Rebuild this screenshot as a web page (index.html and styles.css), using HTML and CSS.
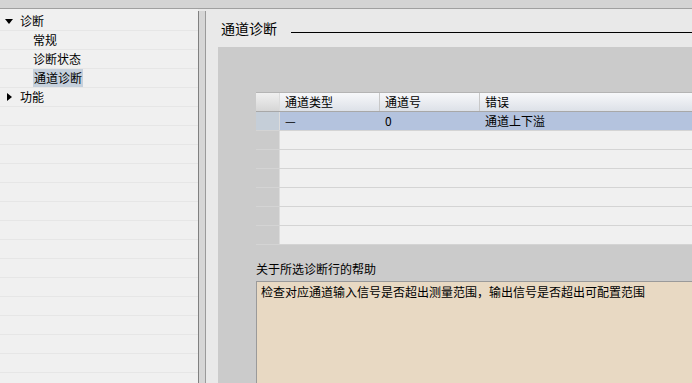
FILE: index.html
```html
<!DOCTYPE html>
<html lang="zh-CN">

<head>
  <meta charset="UTF-8">
  <title>通道诊断</title>
  <link rel="stylesheet" href="styles.css">
</head>

<body>
  <div class="topbar"></div>

  <div class="main">
    <div class="tree">
      <div class="tree-row"><span class="arrow down"></span>诊断</div>
      <div class="tree-row child">常规</div>
      <div class="tree-row child">诊断状态</div>
      <div class="tree-row child"><span class="selected">通道诊断</span></div>
      <div class="tree-row"><span class="arrow right"></span>功能</div>
      <div class="tree-row"></div>
      <div class="tree-row"></div>
      <div class="tree-row"></div>
      <div class="tree-row"></div>
      <div class="tree-row"></div>
      <div class="tree-row"></div>
      <div class="tree-row"></div>
      <div class="tree-row"></div>
      <div class="tree-row"></div>
      <div class="tree-row"></div>
      <div class="tree-row"></div>
      <div class="tree-row"></div>
      <div class="tree-row"></div>
      <div class="tree-row"></div>
    </div>

    <div class="splitter"></div>

    <div class="content">
      <div class="title">
        <span>通道诊断</span>
        <div class="title-line"></div>
      </div>

      <div class="panel">
        <div class="grid">
          <div class="grid-row head">
            <div class="cell rowhead"></div>
            <div class="cell c1">通道类型</div>
            <div class="cell c2">通道号</div>
            <div class="cell c3">错误</div>
          </div>
          <div class="grid-row active">
            <div class="cell rowhead"></div>
            <div class="cell c1">—</div>
            <div class="cell c2">0</div>
            <div class="cell c3">通道上下溢</div>
          </div>
          <div class="grid-row"><div class="cell rowhead"></div><div class="cell fill"></div></div>
          <div class="grid-row"><div class="cell rowhead"></div><div class="cell fill"></div></div>
          <div class="grid-row"><div class="cell rowhead"></div><div class="cell fill"></div></div>
          <div class="grid-row"><div class="cell rowhead"></div><div class="cell fill"></div></div>
          <div class="grid-row"><div class="cell rowhead"></div><div class="cell fill"></div></div>
          <div class="grid-row"><div class="cell rowhead"></div><div class="cell fill"></div></div>
        </div>

        <div class="help-label">关于所选诊断行的帮助</div>
        <div class="help-box">检查对应通道输入信号是否超出测量范围，输出信号是否超出可配置范围</div>
      </div>
    </div>
  </div>
</body>

</html>
```

FILE: styles.css
```css
body {
  margin: 0;
  height: 383px;
  overflow: hidden;
  background-color: #e9e9e9;
  font-family: "Noto Sans CJK SC", "Liberation Sans", sans-serif;
  font-size: 12px;
  color: #000;
}

.topbar {
  height: 8px;
  background-color: #d4d4d4;
  border-bottom: 1px solid #a0a0a0;
}

.main {
  display: flex;
  height: 374px;
}

.tree {
  width: 198px;
  padding-top: 3px;
  background-color: #f0f0f0;
  overflow: hidden;
}

.tree-row {
  height: 18px;
  line-height: 18px;
  border-bottom: 1px solid #e6e6e6;
  display: flex;
  align-items: center;
  padding-left: 5px;
  white-space: nowrap;
}

.tree-row.child {
  padding-left: 33px;
}

.selected {
  background-color: #c5d0dc;
  padding: 0 1px;
  line-height: 18px;
}

.arrow {
  width: 0;
  height: 0;
  margin-right: 7px;
}

.arrow.down {
  border-left: 4px solid transparent;
  border-right: 4px solid transparent;
  border-top: 5px solid #000;
}

.arrow.right {
  border-top: 4px solid transparent;
  border-bottom: 4px solid transparent;
  border-left: 5px solid #000;
  margin-left: 2px;
  margin-right: 8px;
}

.splitter {
  width: 6px;
  margin-top: 2px;
  background-color: #d6d6d6;
  border-left: 1px solid #808080;
  border-right: 1px solid #9a9a9a;
}

.content {
  flex: 1;
  min-width: 0;
  display: flex;
  flex-direction: column;
}

.title {
  height: 38px;
  display: flex;
  align-items: center;
  padding-left: 15px;
  font-size: 14px;
}

.title-line {
  flex: 1;
  height: 1px;
  margin-left: 14px;
  margin-top: 8px;
  background-color: #000;
}

.panel {
  flex: 1;
  margin-left: 12px;
  padding: 45px 0 0 38px;
  background-color: #cbcbcb;
  display: flex;
  flex-direction: column;
  overflow: hidden;
}

.grid {
  border-top: 1px solid #b4b4b4;
}

.grid-row {
  display: flex;
  height: 18px;
  line-height: 18px;
  border-bottom: 1px solid #d4d4d4;
  background-color: #f0f0f0;
}

.grid-row.head {
  background: linear-gradient(#f7f8fa, #dde1e8);
  border-bottom: 1px solid #a8a8a8;
}

.grid-row.active {
  background-color: #b4c3de;
}

.cell {
  padding-left: 5px;
  box-sizing: border-box;
  white-space: nowrap;
}

.cell.rowhead {
  width: 24px;
  padding: 0;
  background-color: #cbcbcb;
  border-right: 1px solid #dcdcdc;
}

.head .cell.rowhead {
  background: linear-gradient(#f0f0f0, #d6d6d6);
}

.active .cell.rowhead {
  background-color: #c5ced8;
}

.cell.c1,
.cell.c2 {
  width: 100px;
}

.head .cell.c1,
.head .cell.c2 {
  border-right: 1px solid #c8c8c8;
}

.cell.c3,
.cell.fill {
  flex: 1;
}

.help-label {
  margin-top: 15px;
  height: 21px;
  line-height: 18px;
}

.help-box {
  flex: 1;
  padding: 1px 4px;
  background-color: #e8d9c3;
  border-top: 1px solid #9a9a9a;
  border-left: 1px solid #9a9a9a;
}
```
